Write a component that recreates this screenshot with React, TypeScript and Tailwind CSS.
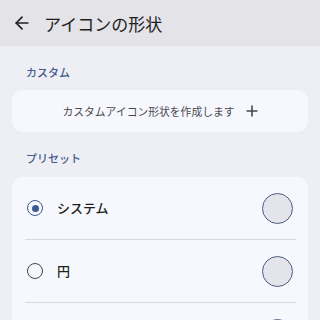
import React, { useState } from 'react'

const font = { fontFamily: '"Noto Sans CJK JP", "Noto Sans", sans-serif' }

const presets = ['システム', '円', '四角']

function Radio({ on }: { on: boolean }) {
  return on ? (
    <span className="flex h-[16px] w-[16px] items-center justify-center rounded-full border-[1.8px] border-[#3d5a94]">
      <span className="h-[7px] w-[7px] rounded-full bg-[#3d5a94]" />
    </span>
  ) : (
    <span className="h-[16px] w-[16px] rounded-full border-[1.8px] border-[#46464a]" />
  )
}

export default function App() {
  const [sel, setSel] = useState(0)

  return (
    <div className="h-[320px] w-[320px] overflow-hidden bg-[#edeff5]" style={font}>
      <div className="flex h-[46px] items-center bg-[#e3e3e8] pl-[12px]">
        <svg width="20" height="20" viewBox="0 0 24 24" fill="none" stroke="#1f1f23" strokeWidth="2" strokeLinecap="round" strokeLinejoin="round">
          <path d="M12 19 5 12l7-7" />
          <path d="M19 12H5" />
        </svg>
        <span className="ml-[12px] text-[17px] leading-none text-[#1f1f23]">アイコンの形状</span>
      </div>

      <div className="px-[12px]">
        <div className="pl-[14px] pt-[18px] pb-[10px] text-[11px] font-medium leading-[16px] text-[#45598c]">カスタム</div>
        <div className="flex h-[42px] items-center justify-center gap-[11px] rounded-[11px] bg-[#f7f8fd]">
          <span className="text-[10.8px] text-[#4a4a50]">カスタムアイコン形状を作成します</span>
          <svg width="12" height="12" viewBox="0 0 12 12" stroke="#47474c" strokeWidth="1.6">
            <path d="M6 0.5v11M0.5 6h11" />
          </svg>
        </div>

        <div className="pl-[14px] pt-[18px] pb-[11px] text-[11px] font-medium leading-[16px] text-[#45598c]">プリセット</div>
        <div className="rounded-t-[11px] bg-[#f7f8fd]">
          {presets.map((p, i) => (
            <div key={p}>
              {i > 0 && <div className="ml-[13px] mr-[12px] h-px bg-[#d7d9de]" />}
              <div className="flex h-[62px] cursor-pointer items-center pl-[15px] pr-[15px]" onClick={() => setSel(i)}>
                <Radio on={sel === i} />
                <span className="ml-[14px] flex-1 text-[13px] font-medium text-[#1f1f23]">{p}</span>
                <span className="h-[31px] w-[31px] rounded-full border-[1.5px] border-[#4d5c86] bg-[#e3e5ea]" />
              </div>
            </div>
          ))}
        </div>
      </div>
    </div>
  )
}
